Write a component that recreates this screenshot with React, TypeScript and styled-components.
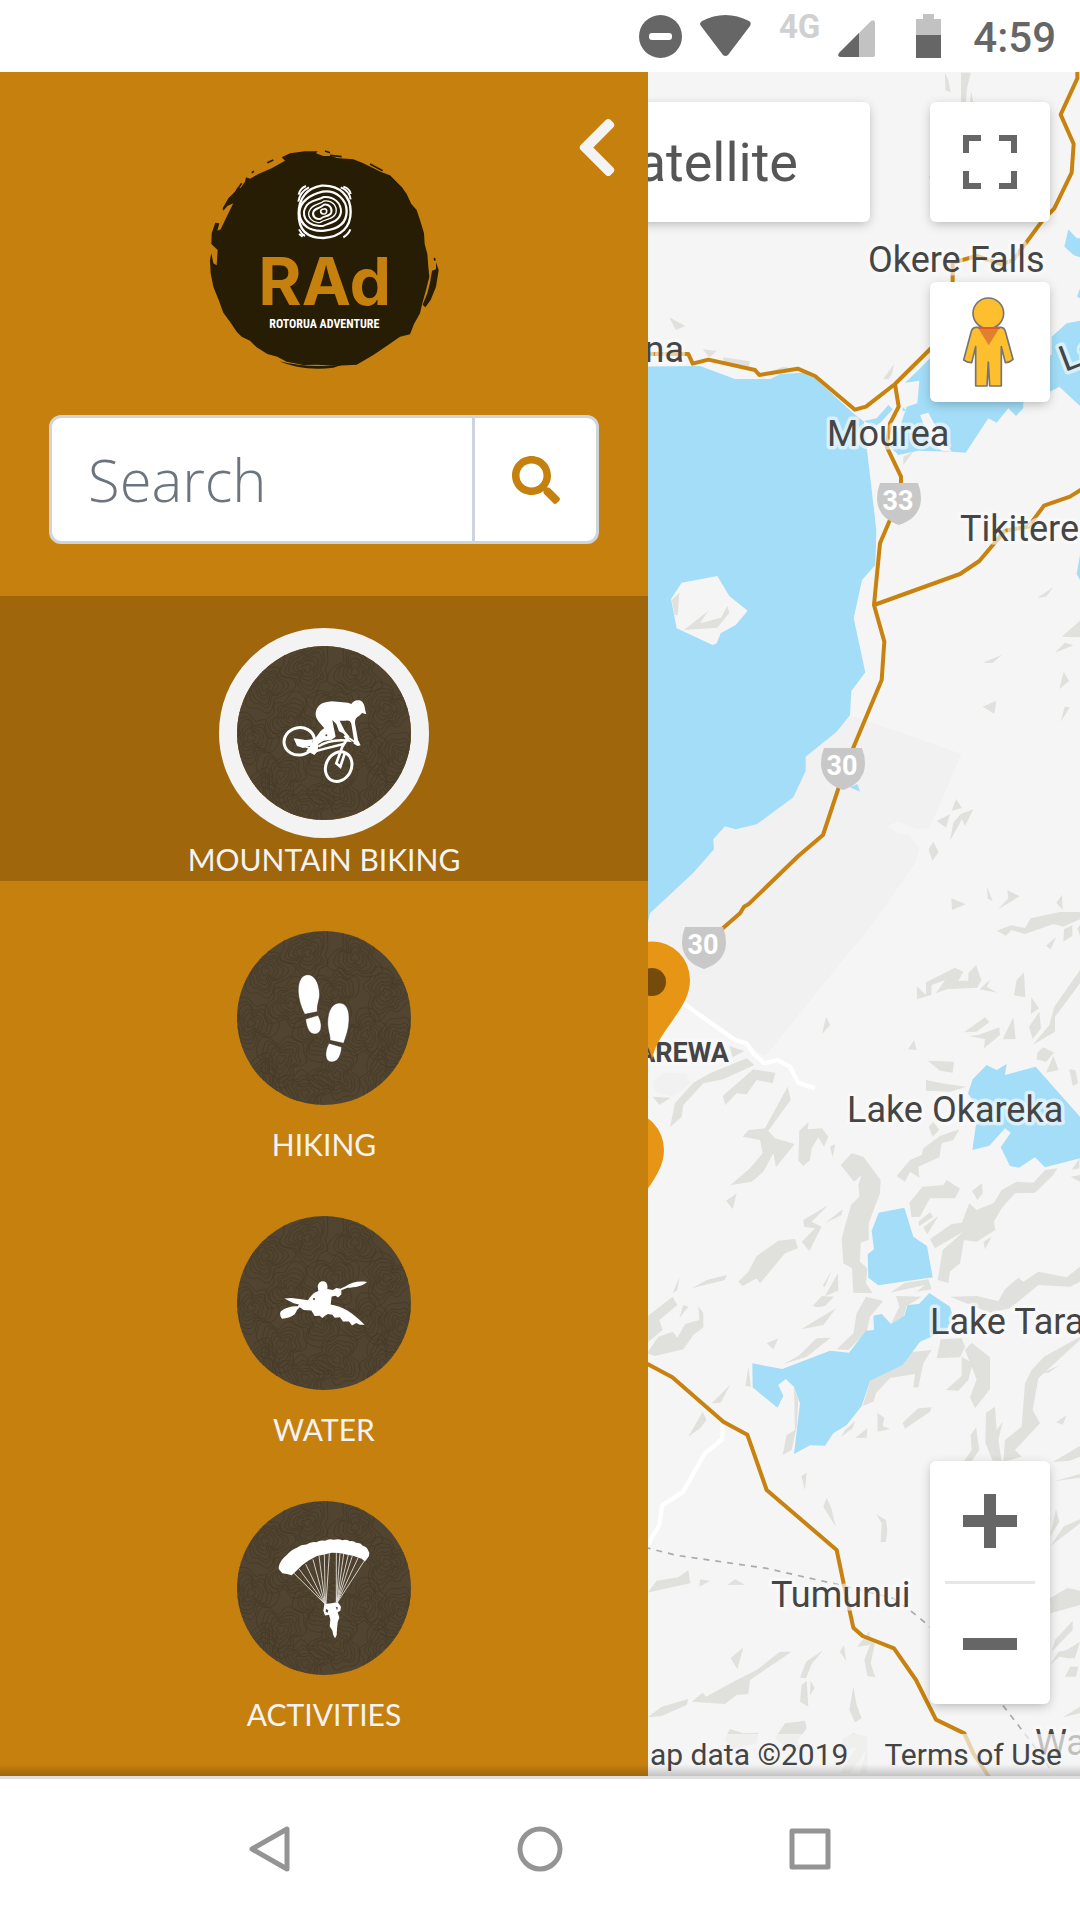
import React from "react";
import styled, { createGlobalStyle } from "styled-components";
import { FaChevronLeft, FaSearch } from "react-icons/fa";

const color = {
  brand: "#c6800e",
  brandDark: "#9f660c",
  ink: "#271c04",
  offWhite: "#f3f3f3",
  badge: "#514531",
  contour: "#463b28",
  control: "#666666",
  land: "#f5f5f5",
  urban: "#f1f1f1",
  water: "#a3ddf8",
  relief: "#e0e1dc",
};

const GlobalStyle = createGlobalStyle`
  *, *::before, *::after { box-sizing: border-box; }
  body { margin: 0; background: #fff; font-family: Roboto, sans-serif; }
  button { border: 0; padding: 0; background: none; font: inherit; color: inherit; cursor: pointer; }
  svg { display: block; }
`;

const Screen = styled.div`
  display: flex;
  flex-direction: column;
  min-height: 100vh;
`;

/* ---------- Status bar ---------- */

const StatusBar = styled.header`
  display: flex;
  align-items: center;
  justify-content: flex-end;
  height: 72px;
  padding-right: 24px;
  color: ${color.control};
`;

const StatusItem = styled.span<{ $gap?: number }>`
  margin-left: ${(p) => p.$gap ?? 0}px;
`;

const Network = styled(StatusItem)`
  align-self: flex-start;
  padding-top: 8px;
  color: #d0d0d0;
  font-size: 33px;
  font-weight: 700;
  line-height: 38px;
`;

const Clock = styled(StatusItem)`
  padding-top: 4px;
  font-size: 42px;
  font-weight: 500;
  line-height: 48px;
`;

/* ---------- Main area ---------- */

const Main = styled.main`
  flex: 1;
  display: grid;
  grid-template-columns: minmax(0, 3fr) minmax(0, 2fr);
`;

const Drawer = styled.aside`
  background: ${color.brand};
`;

const DrawerHeader = styled.div`
  display: grid;
  grid-template-columns: 1fr auto 1fr;
  align-items: start;
  padding: 42px 30px 0;
`;

const Logo = styled.a`
  grid-column: 2;
  margin-top: 36px;
`;

const CloseButton = styled.button`
  justify-self: end;
  color: ${color.offWhite};
  font-size: 67px;
  svg { width: 42px; }
`;

const SearchForm = styled.form`
  display: flex;
  height: 129px;
  margin: 45px 49px 52px;
  border: 3px solid #ced4da;
  border-radius: 12px;
  background: #fff;
  overflow: hidden;
`;

const SearchInput = styled.input`
  flex: 1;
  min-width: 0;
  padding: 0 36px;
  border: 0;
  outline: 0;
  background: none;
  font-family: "Open Sans", "Noto Sans", sans-serif;
  font-size: 58px;
  font-weight: 300;
  color: #495057;
  &::placeholder { color: #6c757d; opacity: 1; }
`;

const SearchButton = styled.button`
  display: grid;
  place-items: center;
  width: 124px;
  border-left: 3px solid #ced4da;
  color: ${color.brand};
  font-size: 48px;
`;

const Category = styled.button<{ $active?: boolean }>`
  display: flex;
  flex-direction: column;
  align-items: center;
  width: 100%;
  padding-top: 32px;
  background: ${(p) => (p.$active ? color.brandDark : "transparent")};
  color: ${color.offWhite};
  font-family: Lato, sans-serif;
  font-size: 30px;
  line-height: 43px;
`;

const Ring = styled.span<{ $active?: boolean }>`
  border: 18px solid ${(p) => (p.$active ? color.offWhite : "transparent")};
  border-radius: 50%;
`;

/* ---------- Map ---------- */

const MapPane = styled.section`
  display: grid;
  grid-template-columns: minmax(0, 1fr);
  position: relative;
  overflow: hidden;
  background: ${color.land};
`;

const MapCanvas = styled.svg`
  position: absolute;
  inset: 0;
  width: 100%;
  height: 100%;
`;

const MapOverlay = styled.div`
  position: relative;
  display: flex;
  flex-direction: column;
  align-items: flex-end;
`;

const ControlStack = styled.div`
  flex: 1;
  display: flex;
  flex-direction: column;
  align-items: flex-end;
  gap: 60px;
  padding: 30px;
`;

const TopRow = styled.div`
  display: flex;
  gap: 60px;
`;

const Control = styled.button`
  display: grid;
  place-items: center;
  width: 120px;
  height: 120px;
  border-radius: 6px;
  background: #fff;
  box-shadow: 0 3px 12px -2px rgba(0, 0, 0, 0.3);
`;

const TypeControl = styled(Control)`
  width: auto;
  padding: 0 72px;
  font-size: 54px;
  color: #565656;
`;

const ZoomControl = styled.div`
  margin-top: auto;
  width: 120px;
  border-radius: 6px;
  background: #fff;
  box-shadow: 0 3px 12px -2px rgba(0, 0, 0, 0.3);
`;

const ZoomButton = styled.button`
  display: grid;
  place-items: center;
  width: 120px;
  height: 120px;
`;

const ZoomDivider = styled.div`
  height: 3px;
  margin: 0 15px;
  background: #e6e6e6;
`;

const Attribution = styled.div`
  display: flex;
  white-space: nowrap;
  font-size: 30px;
  line-height: 42px;
  color: #444;
`;

const AttributionItem = styled.span`
  padding: 0 18px;
  background: rgba(245, 245, 245, 0.7);
  a { color: inherit; text-decoration: none; }
`;

/* ---------- System navigation ---------- */

const NavBar = styled.nav`
  position: relative;
  display: flex;
  align-items: center;
  justify-content: center;
  height: 144px;
  padding-bottom: 2px;
  border-top: 3px solid #e0e0e0;
  background: #fff;
  &::before {
    content: "";
    position: absolute;
    left: 0;
    right: 0;
    top: -15px;
    height: 12px;
    background: linear-gradient(rgba(0, 0, 0, 0), rgba(0, 0, 0, 0.2));
    pointer-events: none;
  }
`;

const NavButton = styled.button`
  display: grid;
  place-items: center;
  width: 25%;
  height: 100%;
`;

/* ---------- Drawings ---------- */

const LogoArt = () => (
  <svg width="230" height="220" viewBox="57 150 690 660" role="img" aria-label="RAd Rotorua Adventure">
    <path
      fill={color.ink}
      d="M275 172 L300 160 L345 154 L383 154 L378 160 L400 168 L425 168 L440 174 L490 178 L520 190 L575 217 L600 226 L636 262 L650 282 L664 312 L680 330 L690 360 L702 400 L704 432 L712 462 L715 500 L718 530 L708 570 L697 610 L690 640 L672 672 L660 703 L630 710 L590 738 L550 765 L500 794 L440 797 L380 794 L340 795 L290 785 L262 770 L232 762 L200 742 L180 722 L155 710 L140 695 L122 668 L100 638 L86 600 L70 560 L62 520 L60 480 L64 460 L70 490 L80 496 L83 450 L64 432 L65 400 L76 368 L88 370 L82 392 L92 388 L110 350 L130 310 L112 318 L100 332 L98 325 L115 295 L135 275 L143 262 L152 264 L165 245 L168 232 L180 236 L205 222 L245 205 L285 182Z"
    />
    <path fill={color.ink} d="M738 487 L746 510 L738 560 L722 600 L706 622 L698 614 L712 580 L720 548 L726 512 L738 508Z" />
    <path fill={color.ink} d="M268 784 C330 800 400 802 462 792 L430 803 C370 812 310 802 268 784Z" />
    <path
      fill="none"
      stroke={color.ink}
      strokeWidth="5"
      d="M128 290 L155 250 M185 218 L192 214 M232 188 L250 180 M405 153 L420 158 M420 166 L455 170 M540 192 L578 212 M733 474 L735 482"
    />
    <g fill="none" stroke="#fff">
      <path strokeWidth="5" d="M401 327 q9 -2 9 7 q-1 9 -9 8 q-9 0 -9 -8 q0 -6 9 -7Z" />
      <path strokeWidth="6" d="M402 314 C418 312 427 324 424 337 C420 350 404 346 392 356 C376 360 366 347 370 336 C375 322 388 328 402 314Z" />
      <path strokeWidth="4" d="M402 303 C426 299 442 318 438 338 C431 359 407 356 391 367 C369 372 352 351 357 335 C365 312 386 316 402 303Z" />
      <path strokeWidth="6" d="M401 291 C432 288 454 310 453 336 C449 364 422 368 401 377 C370 383 340 364 342 336 C348 301 378 303 401 291Z" />
      <path strokeWidth="7" d="M398 275 C440 269 470 300 470 334 C470 374 440 388 404 392 C360 396 330 376 328 338 C328 306 360 284 398 275Z" />
      <path strokeWidth="7" d="M395 257 C450 254 482 290 482 335 C482 380 455 410 400 414 C350 414 325 390 326 340 C326 296 350 264 395 257Z" />
      <path strokeWidth="6" d="M325 305 Q330 275 357 262 M326 284 Q330 264 348 258 M452 262 Q478 272 482 298 M460 260 Q480 266 482 282 M327 388 Q334 402 345 408 M327 402 L338 410 M481 388 Q476 402 460 412" />
    </g>
    <text x="404" y="615" textAnchor="middle" fill={color.brand} fontFamily="Inter, sans-serif" fontWeight="700" fontSize="198">RAd</text>
    <text
      x="403"
      y="684"
      textAnchor="middle"
      fill="#fff"
      fontFamily="'Liberation Sans Narrow', 'Roboto Condensed', 'Open Sans Condensed', 'DejaVu Sans Condensed', sans-serif"
      fontWeight="700"
      fontSize="36"
    >
      ROTORUA ADVENTURE
    </text>
  </svg>
);

/* Topographic rings used as the badge texture. */
const contourCenters = [
  [28, 40, 1], [70, 22, 2], [118, 26, 3], [150, 62, 4], [98, 62, 5], [54, 74, 6],
  [14, 92, 7], [82, 104, 8], [128, 104, 9], [164, 112, 10], [44, 128, 11],
  [100, 144, 12], [146, 148, 13], [68, 162, 14], [20, 150, 15],
];

const contourPaths = contourCenters
  .flatMap(([cx, cy, seed]) =>
    [4, 8, 11, 15, 18, 23].map((r, ring) => {
      const points = Array.from({ length: 40 }, (_, i) => {
        const a = (i / 40) * Math.PI * 2;
        const k =
          1 + 0.2 * Math.sin(3 * a + seed * 2) + 0.13 * Math.sin(5 * a + seed * 5 + ring * 0.5) + 0.08 * Math.cos(8 * a + seed);
        return `${(cx + Math.cos(a) * r * k).toFixed(1)} ${(cy + Math.sin(a) * r * k).toFixed(1)}`;
      });
      return `M${points.join("L")}Z`;
    })
  )
  .join("");

const Badge = ({ id, viewBox, children }: { id: string; viewBox: string; children: React.ReactNode }) => (
  <svg width="174" height="174" viewBox="0 0 174 174" aria-hidden="true">
    <clipPath id={id}>
      <circle cx="87" cy="87" r="87" />
    </clipPath>
    <circle cx="87" cy="87" r="87" fill={color.badge} />
    <path d={contourPaths} clipPath={`url(#${id})`} fill="none" stroke={color.contour} strokeWidth="0.9" />
    <svg width="174" height="174" viewBox={viewBox} preserveAspectRatio="none">
      {children}
    </svg>
  </svg>
);

const Biker = () => (
  <Badge id="clip-bike" viewBox="202 168 522 522">
    <path
      fill="#fff"
      d="M438 374 C437 354 452 338 472 336 L486 334 L535 338 L545 342 C550 333 562 328 573 332 C584 338 585 350 587 362 L590 373 L577 369 L569 377 C560 381 555 388 556 400 L565 450 L573 466 L564 468 L552 461 L553 450 L545 402 C543 392 536 390 528 392 L510 392 L526 424 L540 440 L534 446 L520 430 L508 424 L500 402 L488 390 L492 412 L498 440 L486 449 L462 452 L446 462 L444 484 L434 495 L422 488 L410 482 L420 470 L436 446 L452 424 L464 414 C452 400 440 390 438 374Z"
    />
    <g fill="none" stroke="#fff">
      <ellipse cx="389" cy="454" rx="46" ry="41" strokeWidth="9" transform="rotate(-12 389 454)" />
      <ellipse cx="507" cy="530" rx="38" ry="46" strokeWidth="9" transform="rotate(28 507 530)" />
      <path strokeWidth="7" d="M436 484 L466 476 L522 462 M446 470 Q480 446 538 452 L524 438" />
      <path strokeWidth="8" d="M536 442 L518 470 L500 520 L512 530 L526 488" />
      <path strokeWidth="5" d="M538 444 L564 462 M384 462 L424 476" />
    </g>
    <path fill="#fff" d="M372 445 L408 450 L430 448 L428 466 L400 474 L382 468Z" />
    <circle cx="470" cy="436" r="3" fill={color.badge} />
  </Badge>
);

const Footprints = () => (
  <Badge id="clip-feet" viewBox="112 93 522 522">
    <g fill="#fff" stroke="#33291a" strokeWidth="1.5">
      <path d="M315 343 C301 315 294 285 296 262 C298 240 308 224 324 224 C345 224 358 248 360 282 C360 300 352 310 353 335Z" />
      <path d="M318 357 L355 346 C362 358 366 372 364 384 C362 396 354 402 345 402 C330 402 320 385 318 357Z" />
      <path d="M391 421 C392 405 384 392 384 368 C384 330 400 309 419 309 C440 309 450 330 448 362 C447 390 438 412 432 430Z" />
      <path d="M388 430 L426 441 C425 460 418 486 396 486 C380 486 377 468 379 456 C380 446 384 438 388 430Z" />
    </g>
  </Badge>
);

const Kayaker = () => (
  <Badge id="clip-kayak" viewBox="112 50 522 515">
    <path
      fill="#fff"
      d="M254 294 L275 293 L300 296 L325 299 C336 282 346 275 356 272 L354 258 C356 246 364 242 371 243 C381 244 385 254 383 266 L400 269 L410 263 L422 265 L438 258 C455 246 475 241 502 245 C492 256 465 262 443 262 L425 270 L425 282 L415 291 L408 286 L396 288 L393 312 C430 318 456 334 495 372 L480 372 L470 367 L457 374 L448 362 L430 362 L421 350 L405 351 L398 342 L385 340 L376 345 L368 352 L360 345 L345 346 L335 330 L312 328 L300 320 L292 328 L286 340 C276 348 260 354 247 354 C240 345 240 335 245 331 C260 320 275 316 294 317 L298 312 L282 308Z"
    />
    <circle cx="343" cy="296" r="3" fill={color.badge} />
  </Badge>
);

const Parachutist = () => (
  <Badge id="clip-chute" viewBox="112 893 522 515">
    <path
      fill="none"
      stroke="#e6e3dc"
      strokeWidth="2.6"
      d="M282 1106 L376 1198 L298 1094 M318 1080 L376 1198 L340 1066 M358 1056 L377 1198 L374 1050 M389 1048 L379 1198 M410 1046 V1192 L421 1047 M432 1050 L412 1192 L446 1052 M458 1056 L413 1192 L476 1060 M494 1070 L414 1192"
    />
    <path
      fill="#fff"
      d="M237 1094 C237 1080 246 1066 258 1056 Q274 1038 290 1032 Q305 1022 320 1022 Q335 1012 350 1015 Q362 1008 376 1011 Q388 1004 402 1008 Q416 1004 428 1009 Q440 1006 450 1012 Q462 1010 470 1017 Q482 1016 490 1026 Q502 1028 506 1040 Q512 1048 508 1056 L496 1072 L486 1064 L462 1056 L440 1051 L420 1047 L396 1046 L374 1051 L352 1056 L328 1068 L306 1084 L288 1102 L276 1113 L262 1109 L248 1107Z"
    />
    <path
      fill="#fff"
      d="M374 1198 L396 1196 L414 1192 L424 1206 L422 1218 L414 1222 L419 1238 L414 1252 L412 1272 L411 1290 L406 1299 L401 1290 L398 1276 L390 1264 L392 1244 L388 1230 L376 1232 L371 1218Z"
    />
    <path fill={color.badge} d="M379 1212 L386 1216 L384 1224 L378 1221Z M408 1206 L415 1208 L412 1216Z" />
  </Badge>
);

const Shield = ({ x, y, route }: { x: number; y: number; route: string }) => (
  <g>
    <path
      transform={`translate(${x} ${y})`}
      fill="#c8c8c8"
      d="M-19 0 H19 Q22 8 22 15 C22 30 12 38 0 42 C-12 38 -22 30 -22 15 Q-22 8 -19 0Z"
    />
    <text x={x - 1} y={y + 27} textAnchor="middle" fontSize="27" fontWeight="700" fill="#fff">
      {route}
    </text>
  </g>
);

const Pin = ({ x, y, dot }: { x: number; y: number; dot?: boolean }) => (
  <g transform={`translate(${x} ${y})`}>
    <path fill="#e79515" d="M0 0 C-3 -24 -37 -50 -37 -80 A37 38 0 0 1 38 -80 C38 -50 5 -30 0 0Z" />
    {dot && <circle cx="0" cy="-78" r="14" fill="#744b0a" />}
  </g>
);

const third = 1 / 3;
const sheet = (y: number) => `translate(640 ${y}) scale(${third})`;

const reliefNorth =
  "M915 8 L925 30 L932 67 L916 60Z M963 8 H992 L980 60 L978 96 H963Z M993 62 L1000 96 H990Z M88 742 L136 768 L107 780Z M188 838 L230 843 L208 862Z M250 862 L330 874 L326 892 L250 875Z M762 882 L756 912 L745 928 L730 926Z M870 315 V330 L866 322Z M790 1160 L820 1145 L790 1185Z M345 920 L430 890 L470 898Z";

const reliefMiddle =
  "M1192 293 L1240 262 L1218 290Z M1320 362 V412 L1265 410Z M1245 458 L1275 428 L1300 436Z M1028 488 L1085 464 L1058 489Z M1271 515 L1287 543 L1258 567Z M1028 620 L1069 602 L1063 641Z M1274 620 L1290 622 L1262 665Z M948 897 L966 924 L935 932Z M890 963 L930 943 L918 983Z M930 1022 L940 968 L962 942 L1000 928 L975 978 L966 958Z M880 1025 L896 1056 L877 1083 L866 1048Z M934 1195 L978 1213 L936 1230Z M1041 1160 L1058 1203 L1043 1196Z M1102 1170 L1139 1189 L1073 1229 L1105 1195Z M1266 1184 L1268 1230 L1249 1208Z M1070 1292 L1113 1276 L1155 1284 L1172 1255 L1260 1236 H1320 V1258 L1270 1280 L1240 1272 L1155 1302 L1115 1290 L1098 1307Z M1272 1288 L1297 1275 V1308 L1270 1325Z M1248 1312 L1232 1348 L1218 1337Z M1312 1285 L1320 1275 V1308Z M132 390 L205 332 L180 370 L243 353 L262 318 L268 338 L232 383Z M95 300 L118 278 L113 345 H104Z";

const reliefSouth =
  "M830 198 L858 225 V187 L945 143 L970 155 L955 182 H985 V160 L1008 135 L1024 180 L1012 203 L920 208 L888 220 L915 180 L875 195 L874 225 L831 237Z M1018 208 L1052 178 L1040 200 L1072 218Z M1152 157 L1156 232 L1122 226 L1130 180Z M1174 232 L1197 265 L1173 282Z M1198 275 L1203 325 L1178 357 L1167 320Z M1320 150 V190 L1290 230 L1245 290 V335 L1178 375 L1228 315 L1243 260Z M1120 292 L1127 357 L1088 358Z M972 337 L1035 292 L1048 306 L1010 335Z M988 348 L1015 345 L1078 322 L1080 345 L1032 385 L1035 358Z M1192 398 L1210 382 L1242 398 L1218 426 L1190 418Z M1240 408 L1256 450 L1218 458Z M1288 448 L1306 450 L1314 490 L1298 498Z M822 360 L830 390 L804 388Z M864 422 L942 425 L938 458 L900 452Z M858 480 L905 490 L980 500 L930 515 L858 512Z M866 620 L880 606 L898 630 L878 650Z M558 290 L571 315 L546 342Z M90 622 L105 550 L160 488 L210 460 L320 415 L343 435 L250 478 L190 490 L130 555 L125 590Z M268 378 L313 393 L278 412Z M248 528 L340 448 L406 458 L398 490 L350 480 L320 523 L290 520 L256 555Z M38 530 L92 533 L58 555Z M443 500 L452 540 L385 632 L405 655 L464 672 L408 742 L400 700 L370 755 L335 785 L270 796 L330 745 L368 700 L360 660 L308 650 L325 630 L375 625Z M478 632 L506 605 L503 628 L546 625 L565 650 L552 680 L535 652 L515 685 L510 720 L490 738 L475 722Z M570 680 L586 672 L578 712Z M290 820 L278 867 L258 842Z M602 735 L635 700 L670 710 L722 780 L720 820 L686 910 V960 L662 968 L660 1025 L682 1045 L678 1090 L698 1120 L640 1118 L636 1045 L610 1030 L605 955 L633 855 L658 830 L655 795 L665 765 L642 785Z M770 768 L810 720 L845 705 L850 685 L900 648 L958 628 L940 660 L905 670 L898 712 L835 740 L838 773 L810 755 L795 785Z M808 848 L848 800 L910 795 L920 780 L960 806 L945 835 L870 835 L840 890 L815 892Z M835 905 L870 877 L880 890 L838 918Z M895 888 L862 943 L850 922Z M870 958 L935 912 L965 908 L988 850 L1010 870 L1062 848 L1085 810 L1130 785 L1180 788 L1215 750 L1252 745 L1240 765 L1185 818 L1125 820 L1085 865 L1062 905 L1066 930 L1010 965 L972 960 L960 1030 L930 1055 L925 1090 L893 1080 L908 990 L970 935 L885 985Z M1026 790 L1028 820 L1012 840 L996 812Z M1030 965 L1055 950 L1035 988Z M1295 750 L1318 715 V745Z M1292 770 L1320 765 V785Z M490 900 L565 855 L515 905 L545 920 L508 993 L485 965 L525 925 L492 920Z M555 910 L608 868 L605 885Z M295 1085 L325 1055 L350 1008 L415 962 L465 957 L474 985 L435 1000 L360 1090 L350 1075 L308 1098Z M155 1105 L200 1080 L260 1065 L255 1080Z M118 1072 L112 1110 L98 1120Z M20 1190 L98 1130 L112 1155 L58 1200 L68 1230 L20 1270Z M145 1160 L118 1195 L130 1155Z M175 1158 L190 1180 V1222 L160 1245 L130 1288 L45 1308 L20 1300 L55 1250 L98 1235 L112 1253 L135 1212 L178 1200Z M548 1098 L575 1050 L555 1100Z M594 1060 L595 1112 L555 1128Z M518 1158 L545 1128 L582 1130 L555 1158 L533 1162Z M588 1165 L550 1215 L483 1228Z M415 1255 L400 1288 L380 1270Z M430 1333 L475 1308 L530 1255 L572 1253 L500 1310Z M590 1288 L640 1240 L650 1180 L678 1130 L730 1143 L690 1190 L680 1235 L625 1290Z M750 1118 L795 1088 L865 1078 L875 1108 L830 1115 L855 1095Z M768 1128 L845 1130 L800 1158 L790 1190 L753 1212 L778 1160Z M930 1130 L1010 1128 L1075 1143 L1095 1108 L1135 1073 L1150 1085 L1195 1055 L1280 1072 L1320 1040 V1085 L1290 1100 L1195 1095 L1110 1165 L1050 1178Z M890 1315 L902 1258 L965 1255 L975 1280 L960 1312Z M975 1290 L995 1268 L1050 1312 V1408 L1005 1465 L990 1432 L1010 1378Z M965 1310 L998 1330 L985 1380 L955 1412 L918 1410 L965 1368Z M1175 1350 L1212 1310 L1320 1250 V1260 L1195 1375 L1178 1470 L1200 1510 L1125 1590 L1145 1610 L1090 1625 L1095 1560 L1145 1520 L1155 1390Z";

const reliefFar =
  "M690 92 L820 5 L875 0 L850 40 L835 112 L820 112 L825 72 L750 84 L708 130 L700 155 L668 168Z M270 105 L242 158 L215 160Z M188 185 L200 210 L180 235 L145 260Z M325 50 L333 110 L316 108Z M462 110 L475 150 L470 230 L455 300 L428 315 L440 255 L465 240Z M602 262 L615 240 L645 213 L638 235Z M682 235 L680 263 L645 264Z M712 188 L733 203 L728 228 L750 237 L713 245Z M788 218 L835 175 L875 172 L870 185 L795 236Z M1280 195 L1268 224 L1248 217Z M1038 188 L1065 170 L1070 240 L1088 215 L1075 270 L1085 333 L1058 332 L1036 278Z M1008 232 L1018 300 L995 333 H972 L995 300 L992 255Z M1205 70 L1260 45 L1225 68Z M1320 288 L1238 336 L1290 332 L1320 320Z M1245 393 L1320 372 V383Z M1248 478 L1258 515 L1230 560Z M1232 588 L1270 530 L1320 508 V520Z M1230 745 L1282 714 L1320 722 V765 L1232 790Z M1298 812 V840 L1235 905 L1245 870Z M1320 875 L1305 925 L1284 925 L1258 920 L1230 945 L1255 905 L1280 900Z M1275 980 L1290 950 L1315 950 L1308 980Z M1268 1102 L1320 1070 V1090Z M484 378 L500 368 L495 420Z M560 443 L574 475 L587 530 L550 470Z M708 492 L738 510 L742 540 L738 575 L722 577 L725 520Z M23 728 L50 692 L115 682 L145 660 L151 700Z M180 688 L210 693 L178 710Z M285 688 L315 704 L262 705Z M310 892 L292 958 L272 925Z M155 1055 L188 1028 L198 1040 L290 990 L350 960 L420 905 L455 905 L330 990 L325 1032 L290 1035 L255 1062Z M23 1102 L65 1070 L145 1047 L140 1065 L65 1098Z M550 900 L515 942 L498 985 L480 983 L498 935Z M612 885 L618 932 L600 905Z M705 880 L692 940 L706 982 L682 978 L673 930 L690 885 L652 890 L688 843 L690 870Z M485 1005 L500 992 L505 1070 L480 1055Z M512 992 L524 1015 L510 1035Z M640 1010 L650 1065 L665 1105 L645 1117 L628 1080Z M405 1165 L435 1120 L495 1112 L500 1135 L470 1175 L500 1200 L440 1195Z M255 1165 L270 1137 L310 1150 L355 1148 L350 1180 L270 1200Z M610 1165 L640 1150 L682 1160 V1270 H660 L680 1200 L630 1270 H600 L650 1190 L600 1210Z";

const waterNorth =
  "M0 890 L180 888 L285 927 L392 927 L420 912 L490 908 L525 925 L640 1030 L672 1055 L680 1130 L706 1355 H0Z M672 1053 L710 1045 L745 1005 L758 1018 L720 1060 L700 1070Z M880 855 L835 900 L795 938 L838 932 L832 1000 L800 1010 L780 1070 L750 1130 L775 1155 L835 1142 L935 1145 L977 1148 L1045 1045 L1070 1058 L1105 1015 L1128 1038 L1150 1015 V970 L1230 965 L1258 950 L1320 1008 V752 L1280 760 L1235 800 V855Z M1285 478 L1310 505 H1320 V562 L1302 556 L1273 530Z M1320 655 L1311 680 L1320 685Z M765 980 L800 1025 L780 1020Z";

const waterMiddle =
  "M0 0 H697 L709 90 L706 195 L666 240 L641 355 L676 517 L634 573 L630 645 L590 695 L497 770 V813 L460 892 L350 973 L287 988 L255 979 L220 1018 L222 1048 L160 1118 L30 1240 L22 1275 H0Z M630 862 L652 852 L660 875Z M1320 165 L1310 222 L1320 240Z";

const waterSouth =
  "M1040 435 L1070 450 L1100 432 L1095 465 L1187 440 L1320 590 V715 L1215 742 L1185 712 L1137 743 L1110 738 L1082 682 L1112 638 L1095 625 L1048 677 L997 690 L1010 600 L1012 560 L984 520 L998 478Z M716 878 L793 863 L820 950 L861 978 L878 1072 L715 1096 L685 1073 L683 1003 L702 988 L695 932Z M337 1330 L427 1347 L570 1292 L627 1298 L678 1232 L702 1230 L700 1187 L725 1182 L753 1212 L793 1187 L803 1155 L837 1152 L868 1119 L930 1160 L938 1190 L920 1230 L840 1265 L788 1335 L690 1382 L665 1458 L620 1515 L580 1540 L555 1577 L510 1576 L462 1602 L480 1450 L462 1400 L437 1377 L415 1395 L430 1428 L412 1463 L338 1402Z";

const places = [
  { name: "Okere Falls", x: 868, y: 272 },
  { name: "Mourea", x: 827, y: 446 },
  { name: "Tikitere", x: 960, y: 541 },
  { name: "Lake Okareka", x: 847, y: 1122 },
  { name: "Lake Tarawera", x: 930, y: 1334 },
  { name: "Tumunui", x: 771, y: 1607 },
  { name: "Waimangu", x: 1035, y: 1755 },
];

const RegionMap = () => (
  <MapCanvas viewBox="648 72 432 1704" preserveAspectRatio="xMinYMin slice" aria-label="Map of the Rotorua region">
    <path
      transform={sheet(500)}
      fill={color.urban}
      d="M630 645 L965 762 L868 985 L828 988 L775 965 L740 978 L775 1000 L808 1003 L838 1045 L825 1090 L700 1270 L552 1450 L375 1670 L320 1630 L270 1615 L135 1515 L0 1500 V900Z M35 1745 L75 1718 L140 1720 L150 1750 L100 1790 L45 1775Z"
    />
    <g fill={color.relief}>
      <path transform={sheet(70)} d={reliefNorth} />
      <path transform={sheet(920)} d={reliefSouth} />
      <path transform={sheet(1350)} d={reliefFar} />
    </g>
    <g fill={color.water}>
      <path transform={sheet(70)} d={waterNorth} />
      <path transform={sheet(500)} d={waterMiddle} />
      <path transform={sheet(920)} d={waterSouth} />
    </g>
    <g fill={color.land}>
      <path transform={sheet(70)} d="M840 1035 L865 1028 L890 1075 L935 1145 L905 1142 L870 1110Z M775 1000 L800 960 L832 940 L825 995 L790 1010 L770 1080 L755 1110Z" />
      <path transform={sheet(500)} d="M125 248 L232 228 L268 288 L323 332 L287 375 L242 400 L230 430 L218 435 L110 385 L93 297Z" />
    </g>
    <path transform={sheet(500)} fill={color.relief} d={reliefMiddle} />

    <g fill="none" stroke="#fff" strokeWidth="13" strokeLinejoin="round">
      <path transform={sheet(920)} d="M130 250 L285 360 L320 370 L340 400 L373 430 L412 420 L450 440 L475 488 L525 505" />
      <path transform={sheet(1350)} d="M248 225 L246 268 L193 312 L130 425 L66 467 L58 525 L20 590" />
    </g>
    <path
      transform={sheet(1350)}
      fill="none"
      stroke="#aaa"
      strokeWidth="5"
      strokeDasharray="18 18"
      d="M14 592 L110 616 L380 655 L480 678 L600 705 L760 745 L815 785 L880 838 L1080 1055 L1165 1165 L1240 1270"
    />
    <g fill="none" stroke="#c8820f" strokeWidth="12" strokeLinejoin="round">
      <path
        transform={sheet(70)}
        d="M0 847 L30 852 L145 852 L158 881 L205 869 L345 900 L358 915 L473 896 L525 918 L645 1019 L678 1010 L765 942 L880 828 M765 942 L776 1010 L750 1060 L740 1130 L783 1220 V1245 M938 640 V578 L1010 558 L1085 583 L1120 570 L1205 455 L1243 415 L1295 308 L1301 222 L1262 134 L1312 25 V0"
      />
      <path
        transform={sheet(500)}
        d="M752 55 L720 130 L702 315 L733 425 L725 540 L637 750 M597 860 L549 1005 L475 1068 L325 1213 L312 1220 L300 1240 L245 1288 M702 315 L960 222 L1018 183 L1095 92 L1165 80 L1212 17 L1290 -10 L1330 -35"
      />
      <path
        transform={sheet(1350)}
        d="M0 30 L97 82 L250 215 L322 254 L380 420 L590 600 L613 710 L640 833 L668 858 L762 895 L828 990 L888 1109 L973 1150 L1000 1210 L1050 1285"
      />
    </g>

    <g fontFamily="Roboto, sans-serif">
      <Shield x={899} y={483} route="33" />
      <Shield x={843} y={748} route="30" />
      <Shield x={704} y={927} route="30" />
      <g fill="#454545" stroke="#fafafa" strokeOpacity="0.65" strokeWidth="7" strokeLinejoin="round" paintOrder="stroke" fontSize="36">
        {places.map((p) => (
          <text key={p.name} x={p.x} y={p.y}>
            {p.name}
          </text>
        ))}
        <text x="684" y="362" textAnchor="end">Hamurana</text>
        <text transform="translate(1065 372) rotate(-21)">Lake Rotoiti</text>
        <text x="729" y="1062" textAnchor="end" fontSize="27" fontWeight="700">WHAKAREWAREWA</text>
      </g>
    </g>
    <Pin x={652} y={1060} dot />
    <Pin x={626} y={1230} />
  </MapCanvas>
);

const Pegman = () => (
  <svg width="120" height="120" viewBox="870 636 360 360" aria-hidden="true">
    <g fill="#fdbf2d" stroke="#757575" strokeWidth="5" strokeLinejoin="round">
      <path d="M1008 772 H1083 Q1093 773 1096 784 L1119 868 Q1108 878 1096 878 L1084 830 V948 H1049 L1045 876 L1041 948 H1007 V830 L995 878 Q982 878 971 870 L994 784 Q997 773 1008 772Z" />
      <circle cx="1045" cy="730" r="46" />
    </g>
    <path fill="#e1802e" d="M1015 775 H1078 L1046 826Z" />
    <path fill="#dd5a2b" d="M1012 771 H1080 V777 H1016Z" />
  </svg>
);

const categories = [
  { label: "MOUNTAIN BIKING", icon: <Biker />, active: true },
  { label: "HIKING", icon: <Footprints /> },
  { label: "WATER", icon: <Kayaker /> },
  { label: "ACTIVITIES", icon: <Parachutist /> },
];

export default function App() {
  return (
    <Screen>
      <GlobalStyle />
      <StatusBar>
        <StatusItem>
          <svg width="43" height="43" viewBox="0 0 43 43" aria-hidden="true">
            <circle cx="21.5" cy="21.5" r="21.5" fill="currentColor" />
            <rect x="10" y="18" width="23" height="7" rx="3" fill="#fff" />
          </svg>
        </StatusItem>
        <StatusItem $gap={18}>
          <svg width="51" height="43" viewBox="0 0 51 43" aria-hidden="true">
            <path fill="currentColor" d="M0 9 C0 8 1 7 2 6 C17 -2 34 -2 49 6 C51 7 51 9 50 11 L28 40 Q25.500 42 23 40 L1 11Z" />
          </svg>
        </StatusItem>
        <Network $gap={28}>4G</Network>
        <StatusItem $gap={18}>
          <svg width="37" height="44" viewBox="0 0 37 44" aria-hidden="true">
            <path fill="#c2c2c2" d="M33 7 Q37 5 37 9 V41 Q37 43 35 43 H3 Q-1 43 1 39Z" />
            <path fill="currentColor" d="M21 19 V43 H3 Q-1 43 1 39Z" />
          </svg>
        </StatusItem>
        <StatusItem $gap={41}>
          <svg width="25" height="44" viewBox="0 0 25 44" aria-hidden="true">
            <path fill="#c2c2c2" d="M7 0 H18 V5 H25 V21 H0 V5 H7Z" />
            <path fill="currentColor" d="M0 21 H25 V44 H0Z" />
          </svg>
        </StatusItem>
        <Clock $gap={32}>4:59</Clock>
      </StatusBar>

      <Main>
        <Drawer>
          <DrawerHeader>
            <Logo href="#">
              <LogoArt />
            </Logo>
            <CloseButton type="button" aria-label="Close menu">
              <FaChevronLeft />
            </CloseButton>
          </DrawerHeader>
          <SearchForm onSubmit={(e) => e.preventDefault()}>
            <SearchInput type="text" placeholder="Search" aria-label="Search" />
            <SearchButton type="submit" aria-label="Submit search">
              <FaSearch />
            </SearchButton>
          </SearchForm>
          {categories.map((c) => (
            <Category key={c.label} type="button" $active={c.active}>
              <Ring $active={c.active}>{c.icon}</Ring>
              {c.label}
            </Category>
          ))}
        </Drawer>

        <MapPane>
          <RegionMap />
          <MapOverlay>
            <ControlStack>
              <TopRow>
                <TypeControl type="button">Satellite</TypeControl>
                <Control type="button" aria-label="Toggle fullscreen">
                  <svg width="54" height="54" viewBox="0 0 54 54" fill="none" stroke={color.control} strokeWidth="6" aria-hidden="true">
                    <path d="M3 18 V3 H18 M36 3 H51 V18 M51 36 V51 H36 M18 51 H3 V36" />
                  </svg>
                </Control>
              </TopRow>
              <Control type="button" aria-label="Street View">
                <Pegman />
              </Control>
              <ZoomControl>
                <ZoomButton type="button" aria-label="Zoom in">
                  <svg width="54" height="54" viewBox="0 0 54 54" stroke={color.control} strokeWidth="12" aria-hidden="true">
                    <path d="M27 0 V54 M0 27 H54" />
                  </svg>
                </ZoomButton>
                <ZoomDivider />
                <ZoomButton type="button" aria-label="Zoom out">
                  <svg width="54" height="54" viewBox="0 0 54 54" stroke={color.control} strokeWidth="12" aria-hidden="true">
                    <path d="M0 27 H54" />
                  </svg>
                </ZoomButton>
              </ZoomControl>
            </ControlStack>
            <Attribution>
              <AttributionItem>Map data ©2019</AttributionItem>
              <AttributionItem>
                <a href="#">Terms of Use</a>
              </AttributionItem>
            </Attribution>
          </MapOverlay>
        </MapPane>
      </Main>

      <NavBar aria-label="System">
        <NavButton type="button" aria-label="Back">
          <svg width="46" height="46" viewBox="0 0 46 46" fill="none" stroke="#949494" strokeWidth="5" strokeLinejoin="round">
            <path d="M40 3 V43 L5 23Z" />
          </svg>
        </NavButton>
        <NavButton type="button" aria-label="Home">
          <svg width="46" height="46" viewBox="0 0 46 46" fill="none" stroke="#949494" strokeWidth="5">
            <circle cx="23" cy="23" r="20" />
          </svg>
        </NavButton>
        <NavButton type="button" aria-label="Recent apps">
          <svg width="46" height="46" viewBox="0 0 46 46" fill="none" stroke="#949494" strokeWidth="5" strokeLinejoin="round">
            <rect x="5" y="5" width="36" height="36" />
          </svg>
        </NavButton>
      </NavBar>
    </Screen>
  );
}
